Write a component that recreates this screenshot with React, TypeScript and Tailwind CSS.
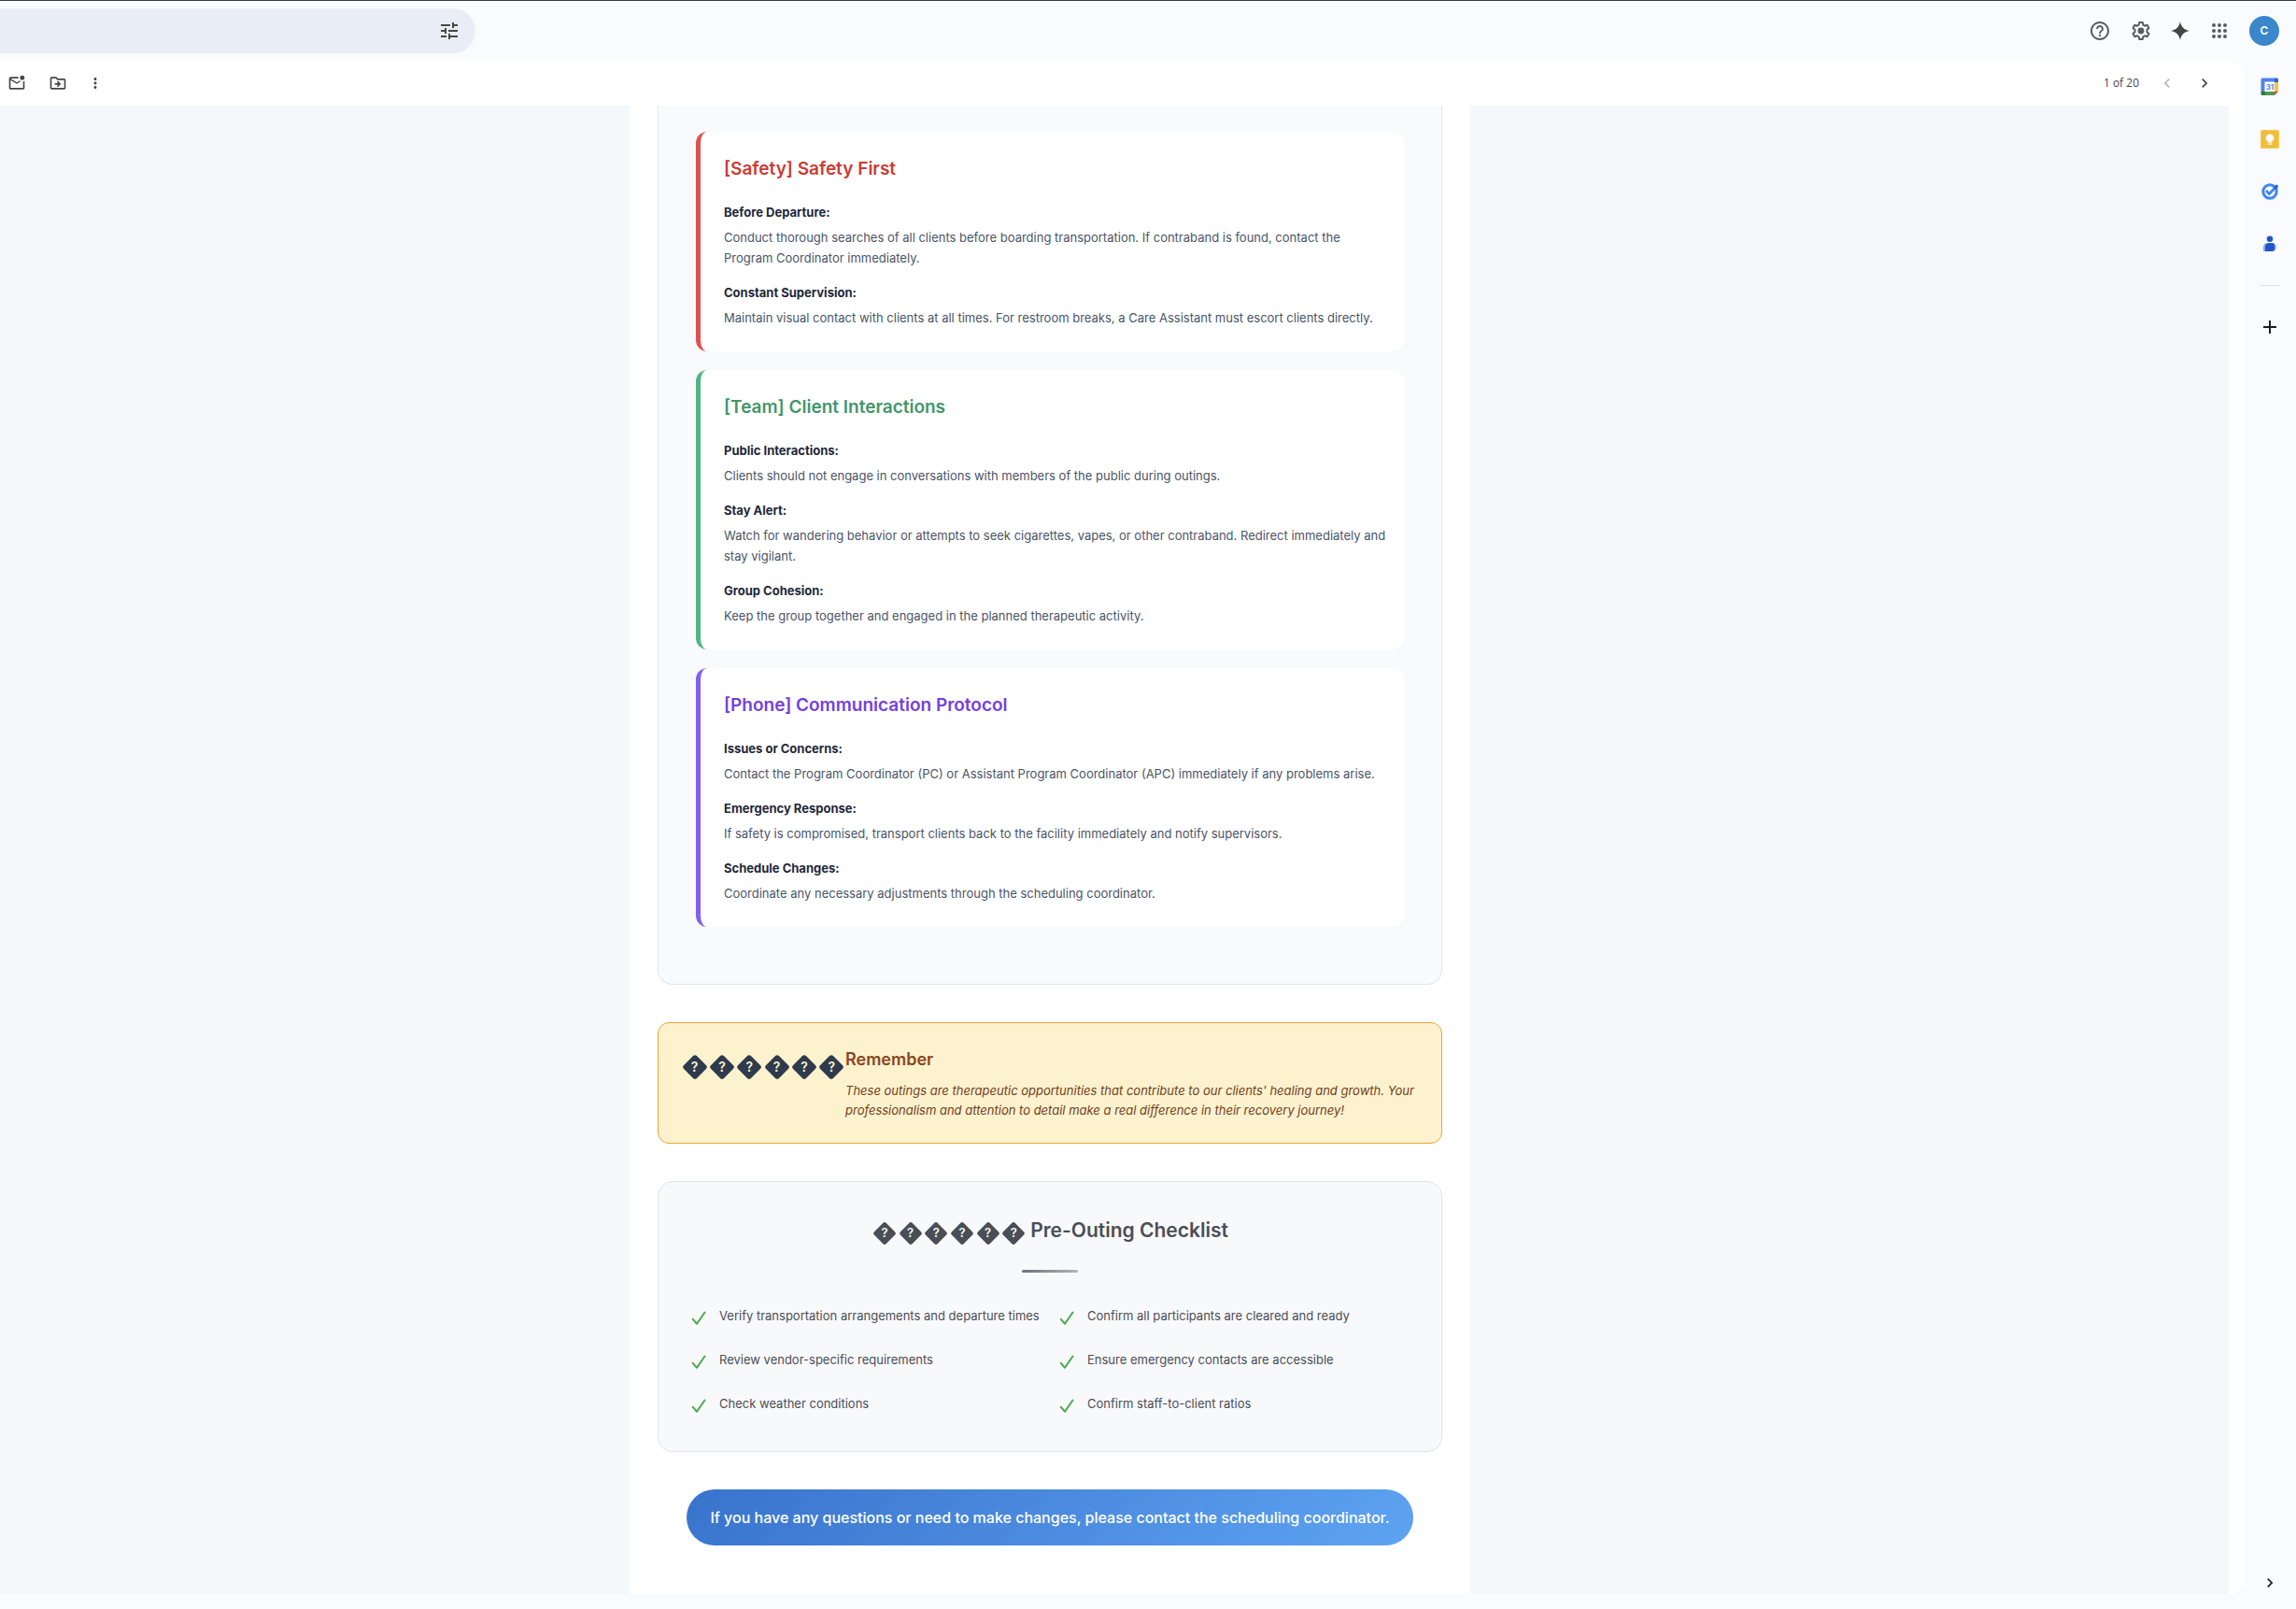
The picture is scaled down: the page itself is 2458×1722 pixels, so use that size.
import React from "react";
import {
  MdTune,
  MdOutlineMarkEmailUnread,
  MdOutlineDriveFileMove,
  MdMoreVert,
  MdHelpOutline,
  MdApps,
  MdChevronLeft,
  MdChevronRight,
  MdAdd,
} from "react-icons/md";

type Note = { label: string; text: string };
type Protocol = { title: string; border: string; color: string; notes: Note[] };

const protocols: Protocol[] = [
  {
    title: "[Safety] Safety First",
    border: "border-[#df534e]",
    color: "text-[#cc3b33]",
    notes: [
      {
        label: "Before Departure:",
        text: "Conduct thorough searches of all clients before boarding transportation. If contraband is found, contact the Program Coordinator immediately.",
      },
      {
        label: "Constant Supervision:",
        text: "Maintain visual contact with clients at all times. For restroom breaks, a Care Assistant must escort clients directly.",
      },
    ],
  },
  {
    title: "[Team] Client Interactions",
    border: "border-[#53b585]",
    color: "text-[#43966c]",
    notes: [
      {
        label: "Public Interactions:",
        text: "Clients should not engage in conversations with members of the public during outings.",
      },
      {
        label: "Stay Alert:",
        text: "Watch for wandering behavior or attempts to seek cigarettes, vapes, or other contraband. Redirect immediately and stay vigilant.",
      },
      {
        label: "Group Cohesion:",
        text: "Keep the group together and engaged in the planned therapeutic activity.",
      },
    ],
  },
  {
    title: "[Phone] Communication Protocol",
    border: "border-[#8460ee]",
    color: "text-[#7440e0]",
    notes: [
      {
        label: "Issues or Concerns:",
        text: "Contact the Program Coordinator (PC) or Assistant Program Coordinator (APC) immediately if any problems arise.",
      },
      {
        label: "Emergency Response:",
        text: "If safety is compromised, transport clients back to the facility immediately and notify supervisors.",
      },
      {
        label: "Schedule Changes:",
        text: "Coordinate any necessary adjustments through the scheduling coordinator.",
      },
    ],
  },
];

const checklist = [
  "Verify transportation arrangements and departure times",
  "Confirm all participants are cleared and ready",
  "Review vendor-specific requirements",
  "Ensure emergency contacts are accessible",
  "Check weather conditions",
  "Confirm staff-to-client ratios",
];

function IconButton({
  label,
  className,
  children,
}: {
  label: string;
  className: string;
  children: React.ReactNode;
}) {
  return (
    <button type="button" aria-label={label} className={`flex shrink-0 items-center justify-center ${className}`}>
      {children}
    </button>
  );
}

function UnknownGlyph({ large }: { large?: boolean }) {
  return (
    <span
      className={`relative flex items-center justify-center font-semibold ${
        large ? "h-[26px] text-sm text-[#fcf2cd]" : "h-6 text-[13px] text-[#f8f9fb]"
      }`}
    >
      <svg
        viewBox="0 0 26 26"
        aria-hidden="true"
        className={`absolute ${large ? "size-[26px] text-[#2f3b4c]" : "size-6 text-[#4a4e55]"}`}
      >
        <rect x="3.2" y="3.2" width="19.6" height="19.6" rx="2.8" transform="rotate(45 13 13)" fill="currentColor" />
      </svg>
      <span className="relative">?</span>
    </span>
  );
}

function GearIcon() {
  return (
    <svg viewBox="0 0 24 24" className="size-6" aria-hidden="true">
      <path
        d="M10.2 3h3.6l.5 2.6 1.9 1.1 2.5-.9 1.8 3.1-2 1.8v2.6l2 1.8-1.8 3.1-2.5-.9-1.9 1.1-.5 2.6h-3.6l-.5-2.6-1.9-1.1-2.5.9-1.8-3.1 2-1.8v-2.6l-2-1.8 1.8-3.1 2.5.9 1.9-1.1z"
        fill="none"
        stroke="currentColor"
        strokeWidth="2"
        strokeLinejoin="round"
      />
      <circle cx="12" cy="12" r="3.4" fill="currentColor" />
    </svg>
  );
}

function SparkIcon() {
  return (
    <svg viewBox="0 0 24 24" className="size-6" aria-hidden="true">
      <path d="M12 2c.9 5.6 4.4 9.1 10 10-5.6.9-9.1 4.4-10 10-.9-5.6-4.4-9.1-10-10 5.6-.9 9.1-4.4 10-10z" fill="currentColor" />
    </svg>
  );
}

function CalendarIcon() {
  return (
    <svg viewBox="0 0 20 20" className="size-5" aria-hidden="true">
      <path d="M2 .5h13V5H5v10H.5V2A1.5 1.5 0 0 1 2 .5z" fill="#4f83ec" />
      <path d="M15 .5h2.5A1.5 1.5 0 0 1 19 2v3h-4z" fill="#2f62cf" />
      <path d="M15 5h4v10h-4z" fill="#f3c242" />
      <path d="M5 15h10v4H5z" fill="#4a9c55" />
      <path d="M.5 15H5v4H2A1.5 1.5 0 0 1 .5 17.500z" fill="#34793f" />
      <path d="M15 15h4l-4 4z" fill="#dc4a3d" />
      <path d="M4.500 4.500h10.500v10.500H4.500z" fill="#fff" />
      <text x="10" y="13" textAnchor="middle" fontSize="8" fontWeight="700" fill="#4f83ec">
        31
      </text>
    </svg>
  );
}

function KeepIcon() {
  return (
    <svg viewBox="0 0 20 20" className="size-5" aria-hidden="true">
      <rect x="0" y="0" width="20" height="20" rx="1.6" fill="#f4cc55" />
      <rect x="1" y="1" width="18" height="18" rx="1" fill="#f1bd3e" />
      <path d="M10 4.500a4.200 4.200 0 0 0-2.200 7.800V13.500h4.400v-1.200A4.200 4.200 0 0 0 10 4.500z" fill="#fff" />
      <path d="M7.800 14.500h4.400v1.300H7.800z" fill="#fff" />
    </svg>
  );
}

function TasksIcon() {
  return (
    <svg viewBox="0 0 20 20" className="size-5" aria-hidden="true">
      <circle cx="10" cy="10" r="7.200" fill="none" stroke="#4285f4" strokeWidth="3" />
      <path d="M6 9l3.400 3.400 5-5.200" fill="none" stroke="#4285f4" strokeWidth="2.800" />
      <path d="M13.200 6.300l3.300-3.500 2.200.2.100 2.300-3 3z" fill="#2a62d0" />
    </svg>
  );
}

function ContactsIcon() {
  return (
    <svg viewBox="0 0 20 20" className="size-5" aria-hidden="true">
      <circle cx="10" cy="4.800" r="3.300" fill="#2457c5" />
      <path d="M3 18v-4.500A4.500 4.500 0 0 1 7.500 9h5a4.500 4.500 0 0 1 4.500 4.500 4.500 4.500 0 0 1-4.500 4.500z" fill="#8aabf5" />
      <path d="M5 18v-4.500A4.500 4.500 0 0 1 9 9h3a3 3 0 0 1 3 3v3a3 3 0 0 1-3 3z" fill="#2457c5" />
    </svg>
  );
}

function CheckIcon() {
  return (
    <svg viewBox="0 0 16 16" className="mt-1 size-4 shrink-0" aria-hidden="true">
      <path d="M1.800 8.800l4.200 5L14.500 1.500" fill="none" stroke="#4aa84e" strokeWidth="2" strokeLinecap="round" strokeLinejoin="round" />
    </svg>
  );
}

export default function App() {
  return (
    <div className="flex min-h-screen flex-col border-t border-[#3a3840] bg-[#f9fbff] font-['Inter',sans-serif] text-[#444746]">
      <header className="flex h-16 items-center justify-between pr-[18px]">
        <div className="flex h-12 w-[509px] items-center justify-end rounded-r-full bg-[#e9eef6] pr-4">
          <IconButton label="Show search options" className="size-6">
            <MdTune className="size-6" />
          </IconButton>
        </div>
        <div className="flex items-center text-[#5a5d60]">
          <IconButton label="Support" className="mr-0.5 h-10 w-[42px]">
            <MdHelpOutline className="size-6" />
          </IconButton>
          <IconButton label="Settings" className="h-10 w-[42px]">
            <GearIcon />
          </IconButton>
          <IconButton label="Ask Gemini" className="h-10 w-[42px] text-[#444746]">
            <SparkIcon />
          </IconButton>
          <IconButton label="Google apps" className="h-10 w-[42px]">
            <svg viewBox="0 0 24 24" className="size-6" fill="currentColor" aria-hidden="true">
              {[6, 12, 18].map((y) => [6, 12, 18].map((x) => <circle key={`${x}-${y}`} cx={x} cy={y} r="2" />))}
            </svg>
          </IconButton>
          <button
            type="button"
            aria-label="Account"
            className="ml-[11px] flex size-8 items-center justify-center rounded-full bg-[#3b87cb] text-xs font-semibold text-white"
          >
            C
          </button>
        </div>
      </header>

      <div className="flex flex-1">
        <main className="mb-4 flex min-w-0 flex-1 flex-col overflow-hidden rounded-r-2xl bg-white">
          <div className="flex h-12 items-center justify-between pr-[22px]">
            <div className="flex items-center pl-2">
              <IconButton label="Mark as unread" className="mr-6 size-5">
                <MdOutlineMarkEmailUnread className="size-5" />
              </IconButton>
              <IconButton label="Move to" className="mr-5 size-5">
                <MdOutlineDriveFileMove className="size-5" />
              </IconButton>
              <IconButton label="More" className="size-5">
                <MdMoreVert className="size-[18px]" />
              </IconButton>
            </div>
            <div className="flex items-center text-xs">
              <span className="mr-5 font-['Open_Sans',sans-serif]">1 of 20</span>
              <IconButton label="Newer" className="size-5 text-[#b4b6b8]">
                <MdChevronLeft className="size-5" />
              </IconButton>
              <IconButton label="Older" className="ml-5 mr-2.5 size-5">
                <MdChevronRight className="size-5" />
              </IconButton>
            </div>
          </div>

          <div className="mr-4 flex flex-1 justify-center bg-[#f5f7fb] pr-[138px]">
            <article className="w-full max-w-[900px] bg-white px-[30px] pb-[51px]">
              <section className="flex flex-col gap-5 rounded-b-2xl border-x border-b border-[#e2e6ee] bg-[#f9fafc] px-10 pb-[61px] pt-7">
                {protocols.map((p) => (
                  <div key={p.title} className={`rounded-xl border-l-[5px] bg-white py-[25px] pr-[17px] pl-[25px] ${p.border}`}>
                    <h3 className={`mb-5 text-[19px] leading-[30px] font-semibold ${p.color}`}>{p.title}</h3>
                    <div className="flex flex-col gap-[15px] text-[13px] leading-[22px]">
                      {p.notes.map((n) => (
                        <div key={n.label} className="flex flex-col gap-[5px]">
                          <strong className="font-bold text-[#1e2839]">{n.label}</strong>
                          <p className="text-[#4a5568]">{n.text}</p>
                        </div>
                      ))}
                    </div>
                  </div>
                ))}
              </section>

              <section className="mt-10 flex rounded-xl border border-[#eca53c] bg-[#fcf2cd] px-6 pt-[25px] pb-6">
                <div className="mt-[9px] grid h-[26px] w-44 shrink-0 grid-cols-6">
                  {[0, 1, 2, 3, 4, 5].map((i) => (
                    <UnknownGlyph key={i} large />
                  ))}
                </div>
                <div>
                  <h3 className="mb-[9px] text-lg leading-7 font-semibold text-[#8a4620]">Remember</h3>
                  <p className="text-[13px] leading-[21px] text-[#733c1c] italic">
                    These outings are therapeutic opportunities that contribute to our clients' healing and growth. Your
                    professionalism and attention to detail make a real difference in their recovery journey!
                  </p>
                </div>
              </section>

              <section className="mt-10 rounded-2xl border border-[#dfe2e8] bg-[#f8f9fb] px-[35px] pt-[34px] pb-[27px]">
                <h3 className="flex h-9 items-center justify-center text-[21px] font-semibold text-[#4a4e55]">
                  <span className="mt-1.5 mr-1 grid w-[166px] grid-cols-6">
                    {[0, 1, 2, 3, 4, 5].map((i) => (
                      <UnknownGlyph key={i} />
                    ))}
                  </span>
                  Pre-Outing Checklist
                </h3>
                <div className="mx-auto mt-6 mb-[23px] h-[3px] w-[60px] rounded-sm bg-linear-to-r from-[#6c747e] to-[#adb5bd]" />
                <ul className="grid grid-cols-2 gap-x-5 text-[13px] text-[#4a4e55]">
                  {checklist.map((item) => (
                    <li key={item} className="flex h-[47px] items-center gap-3.5">
                      <CheckIcon />
                      <span>{item}</span>
                    </li>
                  ))}
                </ul>
              </section>

              <div className="mt-10 flex justify-center">
                <p className="rounded-full bg-linear-135 from-[#3973cc] to-[#5ea3f2] px-[25px] py-[18px] text-base leading-6 font-medium text-white">
                  If you have any questions or need to make changes, please contact the scheduling coordinator.
                </p>
              </div>
            </article>
          </div>
        </main>

        <aside className="flex w-14 flex-col items-center text-[#1f1f1f]">
          <IconButton label="Calendar" className="size-14">
            <CalendarIcon />
          </IconButton>
          <IconButton label="Keep" className="size-14">
            <KeepIcon />
          </IconButton>
          <IconButton label="Tasks" className="size-14">
            <TasksIcon />
          </IconButton>
          <IconButton label="Contacts" className="size-14">
            <ContactsIcon />
          </IconButton>
          <hr className="mt-4 mb-4 w-5 border-[#dcdee2]" />
          <IconButton label="Get add-ons" className="size-14">
            <MdAdd className="size-6" />
          </IconButton>
          <IconButton label="Hide side panel" className="mt-auto size-14">
            <MdChevronRight className="size-5" />
          </IconButton>
        </aside>
      </div>
    </div>
  );
}
